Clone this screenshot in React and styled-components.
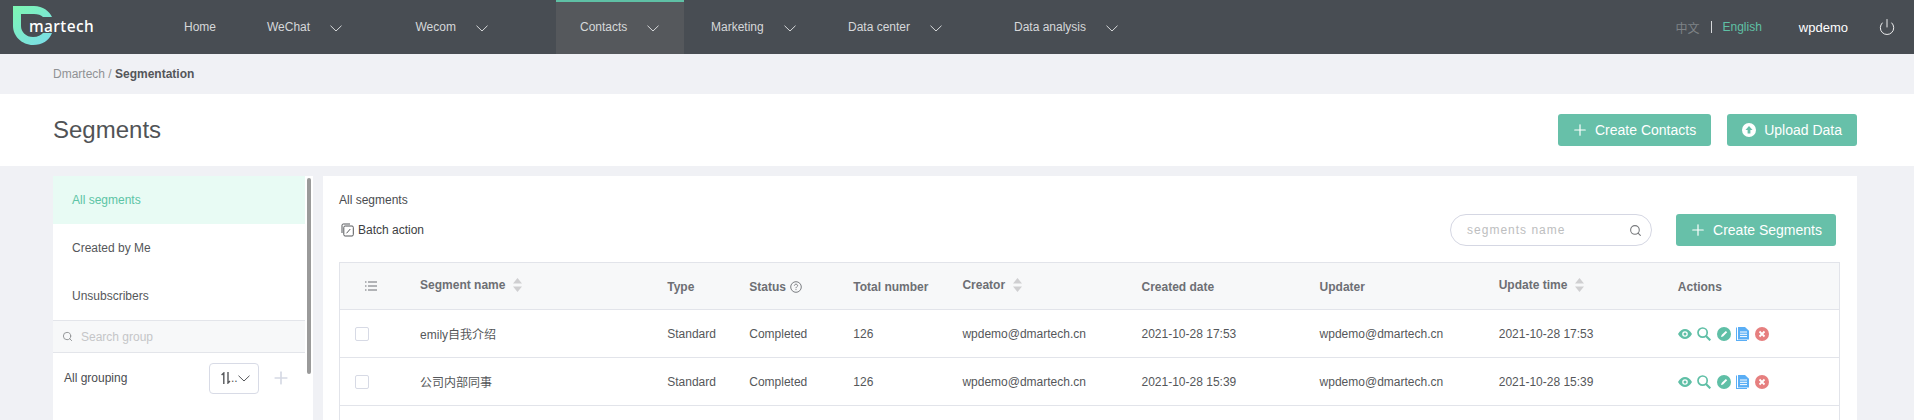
import styled, { createGlobalStyle } from "styled-components";
import { Plus, Power, Search } from "lucide-react";

const GlobalStyle = createGlobalStyle`
  html, body {
    margin: 0;
    height: 420px;
    overflow: hidden;
    background: #f0f1f5;
    font-family: "Liberation Sans", "Noto Sans CJK SC", sans-serif;
    font-size: 12px;
    color: #4a4c50;
  }
  * { box-sizing: border-box; }
`;

const navItems = [
  { label: "Home", width: 83 },
  { label: "WeChat", width: 148.5, arrow: true },
  { label: "Wecom", width: 164.5, arrow: true },
  { label: "Contacts", width: 128, arrow: true, active: true, gapAfter: 3 },
  { label: "Marketing", width: 137, arrow: true },
  { label: "Data center", width: 166, arrow: true },
  { label: "Data analysis", width: 160, arrow: true },
];

const columns = [80, 247, 82, 104, 109, 179, 178, 179, 179, 161];

const rows = [
  { name: "emily自我介绍", created: "2021-10-28 17:53" },
  { name: "公司内部同事", created: "2021-10-28 15:39" },
];

const Header = styled.header`
  display: flex;
  align-items: stretch;
  height: 54px;
  background: #484d53;
  color: #d6d8da;
`;

const LogoBox = styled.div`
  position: relative;
  width: 160px;
  flex: none;
`;

const LogoText = styled.span`
  position: absolute;
  left: 29px;
  top: 15px;
  font-family: "Noto Sans", sans-serif;
  font-size: 15.5px;
  line-height: 22px;
  font-weight: 500;
  letter-spacing: 0.4px;
  color: #fff;
`;

const Nav = styled.nav`
  display: flex;
`;

const NavItem = styled.div`
  display: flex;
  align-items: center;
  gap: 20px;
  flex: none;
  width: ${(p) => p.$width}px;
  margin-right: ${(p) => p.$gapAfter || 0}px;
  padding-left: 24px;
  background: ${(p) => (p.$active ? "#55585c" : "transparent")};
  border-top: 2px solid ${(p) => (p.$active ? "#5fc0a5" : "transparent")};
  & > span { position: relative; top: -1px; }
`;

const HeaderRight = styled.div`
  margin-left: auto;
  display: flex;
  align-items: center;
  padding-right: 18px;
`;

const Lang = styled.span`
  color: ${(p) => p.$color};
`;

const LangLine = styled.i`
  display: block;
  width: 1px;
  height: 12px;
  margin: 0 11px;
  background: #d6d8da;
`;

const UserName = styled.span`
  margin: 0 30px 0 37px;
  font-size: 13px;
  color: #fff;
`;

const Crumbs = styled.div`
  height: 40px;
  padding-left: 53px;
  line-height: 40px;
  color: #8f9194;
  & b { color: #54565a; }
`;

const TitleBar = styled.div`
  display: flex;
  align-items: center;
  height: 72px;
  padding: 0 57px 0 53px;
  background: #fff;
`;

const Title = styled.h1`
  margin: 0 auto 0 0;
  font-size: 24px;
  font-weight: 400;
  color: #515356;
`;

const Button = styled.button`
  display: flex;
  align-items: center;
  gap: ${(p) => p.$gap || 6}px;
  height: 32px;
  margin-left: ${(p) => p.$left || 0}px;
  padding: 0 ${(p) => p.$padRight || 15}px 0 ${(p) => p.$padLeft || 13}px;
  border: 0;
  border-radius: 3px;
  background: #67c0a9;
  color: #fff;
  font-family: inherit;
  font-size: 14px;
`;

const Body = styled.div`
  display: flex;
  gap: 10px;
  padding: 10px 57px 0 53px;
  height: 254px;
`;

const Sidebar = styled.aside`
  display: flex;
  flex: none;
  width: 260px;
  background: #fff;
`;

const SideColumn = styled.div`
  width: 252px;
`;

const SideItem = styled.div`
  height: 48px;
  padding-left: 19px;
  line-height: 48px;
  background: ${(p) => (p.$active ? "#e8fbf4" : "transparent")};
  color: ${(p) => (p.$active ? "#5cc4a5" : "#55575a")};
`;

const GroupSearch = styled.div`
  display: flex;
  align-items: center;
  gap: 8px;
  height: 33px;
  padding-left: 9px;
  background: #f7f8f9;
  border-top: 1px solid #e3e5ea;
  border-bottom: 1px solid #e3e5ea;
  color: #c5c6c8;
`;

const GroupRow = styled.div`
  display: flex;
  align-items: center;
  height: 50px;
  padding-left: 11px;
`;

const GroupLabel = styled.span`
  margin-right: auto;
`;

const SortSelect = styled.div`
  display: flex;
  align-items: center;
  width: 50px;
  height: 31px;
  padding-left: 11px;
  border: 1px solid #d8dbe6;
  border-radius: 4px;
  color: #55575a;
`;

const AddGroup = styled.div`
  display: flex;
  width: 46px;
  padding-left: 12px;
  color: #d5d9e4;
`;

const ScrollTrack = styled.div`
  flex: none;
  width: 8px;
  padding: 2px 0 0 1.5px;
`;

const ScrollThumb = styled.div`
  width: 4.5px;
  height: 196px;
  border-radius: 3px;
  background: #9a9a9a;
`;

const Panel = styled.main`
  flex: 1;
  padding: 16px 17px 0 16px;
  background: #fff;
  overflow: hidden;
`;

const PanelTitle = styled.div`
  line-height: 16px;
  color: #4a4c50;
`;

const Toolbar = styled.div`
  display: flex;
  align-items: center;
  height: 32px;
  margin: 6px 0 16px;
  padding-right: 4px;
`;

const BatchAction = styled.div`
  display: flex;
  align-items: center;
  gap: 4px;
  margin-right: auto;
  padding-left: 2px;
  color: #3c3e42;
`;

const SearchBox = styled.div`
  display: flex;
  align-items: center;
  justify-content: space-between;
  width: 202px;
  height: 32px;
  padding: 0 9px 0 16px;
  border: 1px solid #d5d7e3;
  border-radius: 16px;
  letter-spacing: 1px;
  color: #bdbec0;
`;

const Table = styled.table`
  width: 1501px;
  table-layout: fixed;
  border-collapse: separate;
  border-spacing: 0;
  border: solid #e2e4ea;
  border-width: 1px 1px 0;
`;

const HeadCell = styled.th`
  height: 47px;
  padding: 2px 0 0 ${(p) => p.$pad || 0}px;
  background: #f7f8f9;
  border-bottom: 1px solid #e2e4ea;
  text-align: left;
  font-weight: 700;
  color: #6d6f74;
`;

const HeadInner = styled.div`
  display: flex;
  align-items: center;
  gap: ${(p) => p.$gap || 6}px;
  ${(p) => (p.$raised ? "margin-top: -5px;" : "")}
`;

const Cell = styled.td`
  height: 48px;
  padding: 0;
  padding-left: ${(p) => p.$pad || 0}px;
  border-bottom: 1px solid #e2e4ea;
  color: #55575a;
`;

const Check = styled.div`
  width: 14px;
  height: 14px;
  border: 1px solid #d7dae5;
  border-radius: 2px;
`;

const Actions = styled.div`
  display: flex;
  align-items: center;
  gap: 5.5px;
`;

const Chevron = ({ color = "currentColor" }) => (
  <svg width="12" height="7" viewBox="0 0 12 7" fill="none" stroke={color} strokeWidth="1">
    <path d="M0.5 0.7 6 6 11.5 0.7" />
  </svg>
);

const Logo = () => (
  <svg width="60" height="54" viewBox="0 0 60 54" style={{ position: "absolute", left: 0, top: 0 }}>
    <defs>
      <linearGradient id="logoFill" x1="0.1" y1="0" x2="0.9" y2="1">
        <stop offset="0" stopColor="#7df5b4" />
        <stop offset="1" stopColor="#7bdde8" />
      </linearGradient>
    </defs>
    <path
      d="M13 6H34C43 6 49 11 52 17H43C41 15 38 14 34 14H21V26C21 32 26 37 33 37C38 37 41 35 43 33H52C49 41 42 45 33 45C22 45 13 36 13 26Z"
      fill="url(#logoFill)"
    />
  </svg>
);

const UploadIcon = () => (
  <svg width="14" height="14" viewBox="0 0 14 14">
    <circle cx="7" cy="7" r="7" fill="#fff" />
    <path d="M7 3 10.5 7H8.4V10.5H5.6V7H3.5Z" fill="#67c0a9" />
  </svg>
);

const BatchIcon = () => (
  <svg width="13" height="14" viewBox="0 0 13 14" fill="none" stroke="#55575a" strokeWidth="1">
    <path d="M1 10V2.2C1 1.5 1.5 1 2.2 1H9" />
    <rect x="2.8" y="3" width="9.5" height="10" rx="1.3" />
    <path d="M5.5 10.3 9.3 6" />
  </svg>
);

const ListIcon = () => (
  <svg width="12" height="10" viewBox="0 0 12 10" fill="none" stroke="#6d6f74" strokeWidth="1">
    <path d="M3 1H12M3 5H12M3 9H12M0 1H1.5M0 5H1.5M0 9H1.5" />
  </svg>
);

const SortCaret = () => (
  <svg width="9" height="14" viewBox="0 0 9 14" fill="#cfcfd1">
    <path d="M4.5 0 9 5.5H0Z" />
    <path d="M0 8.5H9L4.5 14Z" />
  </svg>
);

const HelpIcon = () => (
  <svg width="12" height="12" viewBox="0 0 12 12" fill="none" stroke="#6d6f74" strokeWidth="0.9">
    <circle cx="6" cy="6" r="5.3" />
    <path d="M4.4 4.7C4.4 3.8 5.1 3.2 6 3.2 6.9 3.2 7.6 3.8 7.6 4.6 7.6 5.7 6 5.8 6 7.2M6 8.2V9.1" />
  </svg>
);

const SortArrows = () => (
  <svg width="10" height="12" viewBox="0 0 10 12" fill="none" stroke="#55575a" strokeWidth="1.4">
    <path d="M2.8 12V1L0.6 3M7 0V11L9 9" />
  </svg>
);

const EyeIcon = () => (
  <svg width="14" height="14" viewBox="0 0 14 14">
    <path d="M0 7C2 3.6 4.4 2 7 2S12 3.6 14 7C12 10.4 9.6 12 7 12S2 10.4 0 7Z" fill="#5fbfa6" />
    <circle cx="7" cy="7" r="2.8" fill="#fff" />
    <circle cx="7" cy="7" r="1.5" fill="#5fbfa6" />
  </svg>
);

const LensIcon = () => (
  <svg width="14" height="14" viewBox="0 0 14 14" fill="none" stroke="#5fbfa6" strokeWidth="1.7">
    <circle cx="5.6" cy="5.6" r="4.6" />
    <path d="M9 9 13.3 13.3" strokeWidth="2.2" />
  </svg>
);

const EditIcon = () => (
  <svg width="14" height="14" viewBox="0 0 14 14">
    <circle cx="7" cy="7" r="7" fill="#5fbfa6" />
    <path d="M4 10 4.6 8 8.8 3.9 10.2 5.2 6 9.4Z" fill="#fff" />
  </svg>
);

const DocIcon = () => (
  <svg width="13" height="14" viewBox="0 0 13 14">
    <path d="M0 0.5V14H11V13H1V0.5Z" fill="#5aaef5" />
    <path d="M2 0H9L13 3.8V12.5H2Z" fill="#5aaef5" />
    <path d="M4 5H11M4 7.3H11M4 9.6H11" stroke="#fff" strokeWidth="1" />
  </svg>
);

const CloseIcon = () => (
  <svg width="14" height="14" viewBox="0 0 14 14">
    <circle cx="7" cy="7" r="7" fill="#e67f7f" />
    <path d="M4.5 4.5 9.5 9.5M9.5 4.5 4.5 9.5" stroke="#fff" strokeWidth="1.8" />
  </svg>
);

const Segments = () => (
  <>
    <Crumbs>
      Dmartech / <b>Segmentation</b>
    </Crumbs>
    <TitleBar>
      <Title>Segments</Title>
      <Button>
        <Plus size={18} strokeWidth={1.6} />
        Create Contacts
      </Button>
      <Button $left={16} $padLeft={15} $gap={8}>
        <UploadIcon />
        Upload Data
      </Button>
    </TitleBar>
    <Body>
      <Sidebar>
        <SideColumn>
          <SideItem $active>All segments</SideItem>
          <SideItem>Created by Me</SideItem>
          <SideItem>Unsubscribers</SideItem>
          <GroupSearch>
            <Search size={11} color="#8d8f92" />
            Search group
          </GroupSearch>
          <GroupRow>
            <GroupLabel>All grouping</GroupLabel>
            <SortSelect>
              <SortArrows />
              ..
              <Chevron color="#55575a" />
            </SortSelect>
            <AddGroup>
              <Plus size={20} strokeWidth={2} />
            </AddGroup>
          </GroupRow>
        </SideColumn>
        <ScrollTrack>
          <ScrollThumb />
        </ScrollTrack>
      </Sidebar>
      <Panel>
        <PanelTitle>All segments</PanelTitle>
        <Toolbar>
          <BatchAction>
            <BatchIcon />
            Batch action
          </BatchAction>
          <SearchBox>
            segments name
            <Search size={13} color="#77797c" />
          </SearchBox>
          <Button $left={24} $padRight={14}>
            <Plus size={18} strokeWidth={1.6} />
            Create Segments
          </Button>
        </Toolbar>
        <Table>
          <colgroup>
            {columns.map((width, i) => (
              <col key={i} style={{ width }} />
            ))}
          </colgroup>
          <thead>
            <tr>
              <HeadCell $pad={25}>
                <ListIcon />
              </HeadCell>
              <HeadCell>
                <HeadInner $raised $gap={8}>
                  Segment name <SortCaret />
                </HeadInner>
              </HeadCell>
              <HeadCell>Type</HeadCell>
              <HeadCell>
                <HeadInner $gap={4}>
                  Status <HelpIcon />
                </HeadInner>
              </HeadCell>
              <HeadCell>Total number</HeadCell>
              <HeadCell>
                <HeadInner $raised $gap={8}>
                  Creator <SortCaret />
                </HeadInner>
              </HeadCell>
              <HeadCell>Created date</HeadCell>
              <HeadCell>Updater</HeadCell>
              <HeadCell>
                <HeadInner $raised $gap={8}>
                  Update time <SortCaret />
                </HeadInner>
              </HeadCell>
              <HeadCell>Actions</HeadCell>
            </tr>
          </thead>
          <tbody>
            {rows.map((row) => (
              <tr key={row.name}>
                <Cell $pad={15}>
                  <Check />
                </Cell>
                <Cell>{row.name}</Cell>
                <Cell>Standard</Cell>
                <Cell>Completed</Cell>
                <Cell>126</Cell>
                <Cell>wpdemo@dmartech.cn</Cell>
                <Cell>{row.created}</Cell>
                <Cell>wpdemo@dmartech.cn</Cell>
                <Cell>{row.created}</Cell>
                <Cell>
                  <Actions>
                    <EyeIcon />
                    <LensIcon />
                    <EditIcon />
                    <DocIcon />
                    <CloseIcon />
                  </Actions>
                </Cell>
              </tr>
            ))}
            <tr>
              <Cell colSpan={10} />
            </tr>
          </tbody>
        </Table>
      </Panel>
    </Body>
  </>
);

const App = () => (
  <>
    <GlobalStyle />
    <Header>
      <LogoBox>
        <Logo />
        <LogoText>martech</LogoText>
      </LogoBox>
      <Nav>
        {navItems.map((item) => (
          <NavItem key={item.label} $width={item.width} $active={item.active} $gapAfter={item.gapAfter}>
            <span>{item.label}</span>
            {item.arrow && <Chevron />}
          </NavItem>
        ))}
      </Nav>
      <HeaderRight>
        <Lang $color="#7f8387">中文</Lang>
        <LangLine />
        <Lang $color="#5fc0a5">English</Lang>
        <UserName>wpdemo</UserName>
        <Power size={18} strokeWidth={1.2} color="#fff" />
      </HeaderRight>
    </Header>
    <Segments />
  </>
);

export default App;
